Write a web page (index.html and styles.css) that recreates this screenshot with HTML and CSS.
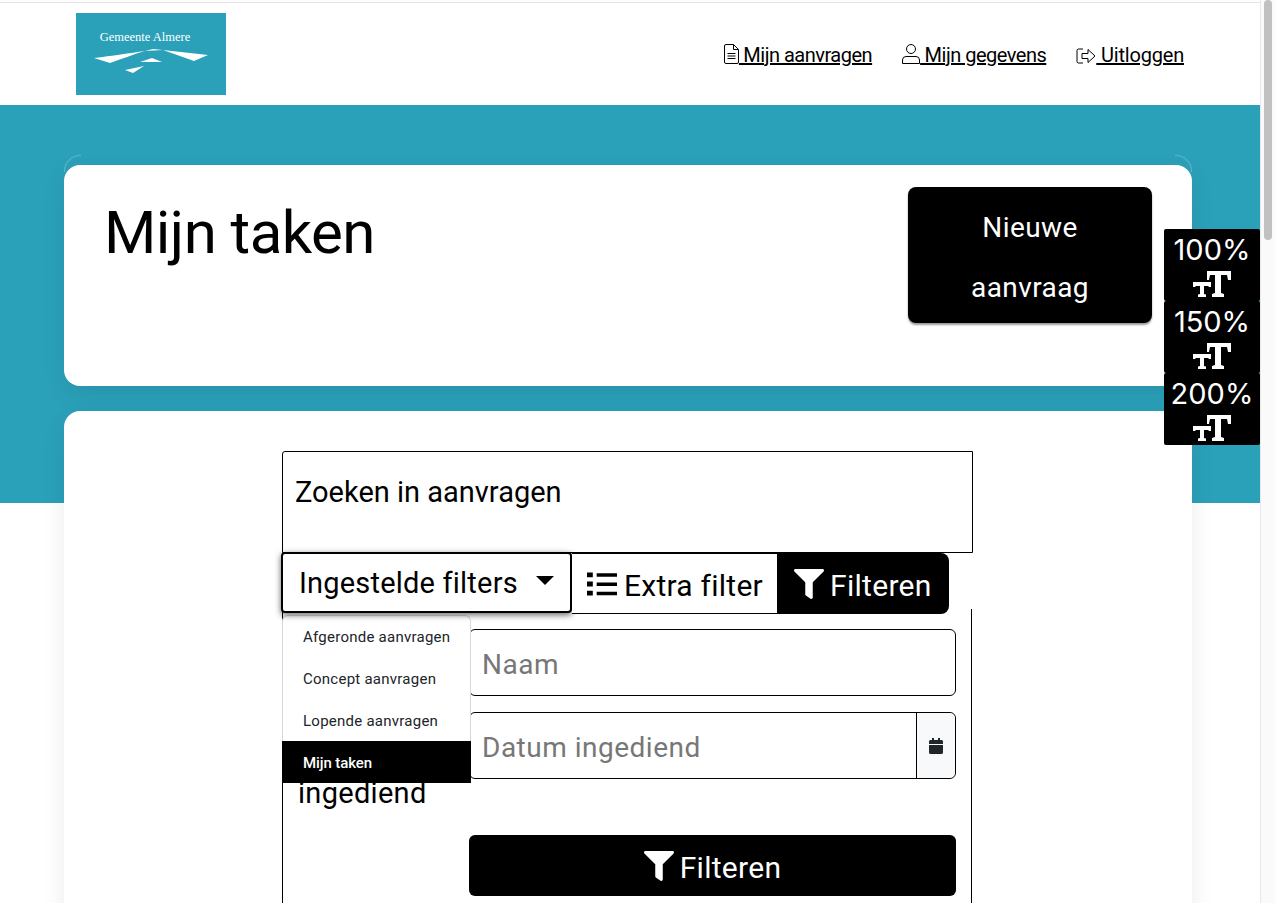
FILE: index.html
```html
<!DOCTYPE html>
<html lang="en">
<head>
    <meta name="viewport" content="width=device-width, initial-scale=1">
    <meta charset="utf-8">
    <title>Mijn taken</title>
    <link rel="stylesheet" href="styles.css">
</head>
<body>

<div class="page">

  <div class="top-bar">
    <div class="logo">
      <span class="logo-name">Gemeente Almere</span>
      <svg class="logo-mark" viewBox="0 0 116 26" width="116" height="26">
        <path fill="#fff" d="M0 10 C18 8 36 5 51 3 C40 6 28 11 16 15 Z"/>
        <path fill="#fff" d="M51 3 L59 1 L69 2 Z"/>
        <path fill="#fff" d="M69 2 L114 7 L100 13 Z"/>
        <path fill="#fff" d="M46 14 L58 10 L68 14 Z"/>
        <path fill="#fff" d="M31 22 L50 18 L39 25 Z"/>
      </svg>
    </div>
    <nav class="top-nav">
      <a href="#">
        <svg viewBox="0 0 15 20" width="15" height="20"><path fill="none" stroke="#000" d="M2 .5h7.500L14.500 5.500V18a1.500 1.500 0 0 1-1.500 1.500H2A1.500 1.500 0 0 1 .5 18V2A1.500 1.500 0 0 1 2 .5zM9.500.5v5h5"/><path stroke="#000" d="M3.500 9.500h8M3.500 12h8M3.500 14.500h8"/></svg>
        Mijn aanvragen
      </a>
      <a href="#">
        <svg viewBox="0 0 18 20" width="18" height="20"><circle fill="none" stroke="#000" cx="9" cy="5" r="4.500"/><path fill="none" stroke="#000" d="M4 12.500h10a3.500 3.500 0 0 1 3.500 3.500v3.500H.5V16A3.500 3.500 0 0 1 4 12.500z"/></svg>
        Mijn gegevens
      </a>
      <a href="#" class="nav-logout">
        <svg viewBox="0 0 20 16" width="20" height="16"><path fill="none" stroke="#000" d="M7 1H2.500A1.500 1.500 0 0 0 1 2.500v11A1.500 1.500 0 0 0 2.500 15H7"/><path fill="none" stroke="#000" stroke-linejoin="round" d="M6 5.500h6V1.500l7 6.500-7 6.500v-4H6z"/></svg>
        Uitloggen
      </a>
    </nav>
  </div>

  <div class="hero">
    <div class="frame">
      <div class="card title-card">
        <h1>Mijn taken</h1>
        <button class="new-btn">Nieuwe aanvraag</button>
      </div>
      <div class="card form-card">
        <div class="search-box">Zoeken in aanvragen</div>

        <div class="filter-row">
          <div class="select-box">Ingestelde filters <span class="caret"></span></div>
          <button class="extra-btn">
            <svg viewBox="0 0 31 24" width="30" height="24"><path d="M0 0h6v5H0zM0 9.500h6v5H0zM0 19h6v5H0zM10 1h21v3.500H10zM10 10.500h21v3.500H10zM10 20h21v3.500H10z"/></svg>
            Extra filter
          </button>
          <button class="filter-btn">
            <svg viewBox="0 0 512 512" width="30" height="30"><path fill="#fff" d="M487.976 0H24.028C2.710 0-8.047 25.866 7.058 40.971L192 225.941V432c0 7.831 3.821 15.170 10.237 19.662l80 55.980C298.020 518.690 320 507.493 320 487.980V225.941l184.947-184.970C520.021 25.896 509.338 0 487.976 0z"/></svg>
            Filteren
          </button>
        </div>

        <div class="filter-panel">
          <div class="panel-label">Datum ingediend</div>
          <div class="panel-fields">
            <div class="field">Naam</div>
            <div class="field field-date">
              <span>Datum ingediend</span>
              <span class="date-addon">
                <svg viewBox="0 0 14 16" width="14" height="16"><path fill="#212529" d="M3 0h2v2h4V0h2v2h1.500A1.500 1.500 0 0 1 14 3.500V6H0V3.500A1.500 1.500 0 0 1 1.500 2H3zM0 7h14v7.500a1.500 1.500 0 0 1-1.500 1.500h-11A1.500 1.500 0 0 1 0 14.500z"/></svg>
              </span>
            </div>
            <button class="wide-btn">
              <svg viewBox="0 0 512 512" width="30" height="30"><path fill="#fff" d="M487.976 0H24.028C2.710 0-8.047 25.866 7.058 40.971L192 225.941V432c0 7.831 3.821 15.170 10.237 19.662l80 55.980C298.020 518.690 320 507.493 320 487.980V225.941l184.947-184.970C520.021 25.896 509.338 0 487.976 0z"/></svg>
              Filteren
            </button>
          </div>
          <ul class="filter-menu">
            <li>Afgeronde aanvragen</li>
            <li>Concept aanvragen</li>
            <li>Lopende aanvragen</li>
            <li class="active">Mijn taken</li>
          </ul>
        </div>
      </div>
    </div>
  </div>

  <div class="size-switch">
    <div class="size-item">100%<svg viewBox="0 0 38 26" width="38" height="26"><path fill="#fff" d="M14 0h24v9h-3l-1-5h-6v18l3 1v3H19v-3l3-1V4h-5l-1 5h-2z"/><path fill="#fff" d="M0 11h18v5h-2l-1-1h-4v8l2 .5V26H5v-2.500l2-.5v-8H3l-1 1H0z"/></svg></div>
    <div class="size-item">150%<svg viewBox="0 0 38 26" width="38" height="26"><path fill="#fff" d="M14 0h24v9h-3l-1-5h-6v18l3 1v3H19v-3l3-1V4h-5l-1 5h-2z"/><path fill="#fff" d="M0 11h18v5h-2l-1-1h-4v8l2 .5V26H5v-2.500l2-.5v-8H3l-1 1H0z"/></svg></div>
    <div class="size-item">200%<svg viewBox="0 0 38 26" width="38" height="26"><path fill="#fff" d="M14 0h24v9h-3l-1-5h-6v18l3 1v3H19v-3l3-1V4h-5l-1 5h-2z"/><path fill="#fff" d="M0 11h18v5h-2l-1-1h-4v8l2 .5V26H5v-2.500l2-.5v-8H3l-1 1H0z"/></svg></div>
  </div>

</div>

<div class="scrollbar"><div class="scroll-thumb"></div></div>

</body>
</html>
```

FILE: styles.css
```css
* {
  box-sizing: border-box;
}
html, body {
  height: 100%;
}
body {
  margin: 0;
  font-family: "Roboto", "Liberation Sans", sans-serif;
  color: black;
  background: white;
  overflow: hidden;
}
button {
  font-family: inherit;
  cursor: pointer;
}



.page {
  width: 1260px;
  height: 903px;
  overflow: hidden;
  position: relative;
}
.scrollbar {
  position: fixed;
  top: 0;
  right: 0;
  width: 15px;
  height: 100%;
  background: #fafafa;
  border-left: 1px solid #e8e8e8;
}
.scroll-thumb {
  width: 8px;
  height: 240px;
  margin-left: 3px;
  background: #c1c1c1;
  border-radius: 4px;
}



.top-bar {
  height: 103px;
  margin-top: 2px;
  border-top: 1px solid #e4e4e4;
  padding: 10px 76px 0;
  display: flex;
  justify-content: space-between;
}
.logo {
  width: 150px;
  height: 82px;
  background: #2ba0b9;
  color: white;
  padding-top: 17px;
  text-align: center;
}
.logo-name {
  display: block;
  font-family: "Liberation Serif", serif;
  font-size: 12.500px;
  line-height: 14px;
  padding-right: 12px;
}
.logo-mark {
  display: block;
  margin: 4px 0 0 18px;
}
.top-nav {
  display: flex;
  gap: 30px;
  padding-top: 27px;
}
.top-nav a {
  color: black;
  font-size: 20px;
  line-height: 30px;
  letter-spacing: -0.5px;
  height: 30px;
  white-space: nowrap;
}
.top-nav .nav-logout {
  letter-spacing: -0.2px;
}
.top-nav svg {
  vertical-align: -2px;
}



.hero {
  height: 398px;
  background: #2ba0b9;
  padding: 50px 68px 0 64px;
}
.frame {
  position: relative;
  padding-top: 10px;
}
.frame::before,
.frame::after {
  content: "";
  position: absolute;
  top: 0;
  width: 16px;
  height: 16px;
  border-top: 1px solid rgba(255,255,255,0.25);
}
.frame::before {
  left: 0;
  border-left: 1px solid rgba(255,255,255,0.25);
  border-top-left-radius: 16px;
}
.frame::after {
  right: 0;
  border-right: 1px solid rgba(255,255,255,0.25);
  border-top-right-radius: 16px;
}
.card {
  position: relative;
  z-index: 1;
  background: white;
  border-radius: 16px;
  box-shadow: 0 8px 24px rgba(0,0,0,0.08);
}
.title-card {
  height: 221px;
  padding: 22px 40px 0 40px;
  display: flex;
  justify-content: space-between;
  align-items: flex-start;
}
.title-card h1 {
  margin: 1px 0 0;
  font-size: 60px;
  font-weight: 400;
  line-height: 90px;
  letter-spacing: -0.55px;
}
.new-btn {
  width: 244px;
  height: 136px;
  padding: 11px 40px 10px;
  background: black;
  color: white;
  border: 0;
  border-radius: 8px;
  font-size: 28px;
  line-height: 60px;
  letter-spacing: 0.4px;
  box-shadow: 0 2px 2px rgba(0,0,0,0.4);
}
.form-card {
  margin-top: 25px;
  height: 600px;
  padding: 40px 0 0 218px;
}



.search-box {
  width: 691px;
  height: 102px;
  border: 1px solid black;
  border-radius: 3px 0 0 0;
  padding: 20px 12px;
  font-size: 29px;
  line-height: 40px;
}
.filter-row {
  display: flex;
  height: 61px;
  position: relative;
  z-index: 2;
}
.select-box {
  width: 291px;
  height: 61px;
  margin: -1px 0 0 -1px;
  border: 2px solid black;
  border-radius: 4px;
  padding: 0 16px;
  font-size: 29px;
  line-height: 58px;
  letter-spacing: 0.2px;
  background: white;
  box-shadow: 0 2px 6px rgba(0,0,0,0.6);
  white-space: nowrap;
  display: flex;
  justify-content: space-between;
  align-items: center;
}
.caret {
  width: 0;
  height: 0;
  margin: -4px 0 0 0;
  border-left: 9px solid transparent;
  border-right: 9px solid transparent;
  border-top: 9px solid black;
}
.extra-btn {
  width: 206px;
  height: 61px;
  padding: 3px 0 0 15px;
  background: white;
  border: 1px solid black;
  border-left: 0;
  font-size: 30px;
  letter-spacing: 0.25px;
  display: flex;
  align-items: center;
  gap: 7px;
  white-space: nowrap;
}
.filter-btn {
  width: 171px;
  height: 61px;
  padding: 3px 0 0 16px;
  background: black;
  color: white;
  border: 0;
  border-radius: 0 8px 8px 0;
  font-size: 30px;
  letter-spacing: 0.3px;
  display: flex;
  align-items: center;
  gap: 6px;
}
.extra-btn svg,
.filter-btn svg,
.wide-btn svg {
  margin-top: -3px;
}



.filter-panel {
  width: 690px;
  height: 400px;
  margin-top: -5px;
  border-left: 1px solid black;
  border-right: 1px solid black;
  padding-top: 20px;
  display: flex;
  position: relative;
}
.panel-label {
  width: 186px;
  padding: 103px 0 0 15px;
  font-size: 29px;
  line-height: 41px;
  letter-spacing: 0.3px;
}
.panel-fields {
  width: 487px;
}
.field {
  height: 67px;
  border: 1px solid black;
  border-radius: 6px;
  padding: 0 12px;
  font-size: 28px;
  line-height: 70px;
  letter-spacing: 0.5px;
  color: #777;
  margin-bottom: 16px;
}
.field-date {
  padding-right: 0;
  display: flex;
  justify-content: space-between;
}
.date-addon {
  width: 39px;
  border-left: 1px solid black;
  border-radius: 0 6px 6px 0;
  background: #f8f9fa;
  display: flex;
  align-items: center;
  justify-content: center;
}
.wide-btn {
  width: 487px;
  height: 61px;
  margin-top: 56px;
  padding: 3px 0 0;
  background: black;
  color: white;
  border: 0;
  border-radius: 6px;
  font-size: 30px;
  letter-spacing: 0.3px;
  display: flex;
  align-items: center;
  justify-content: center;
  gap: 6px;
}



.filter-menu {
  position: absolute;
  top: 6px;
  left: -1px;
  width: 189px;
  height: 168px;
  margin: 0;
  padding: 0;
  list-style: none;
  background: white;
  border: 1px solid #d8d8d8;
  border-bottom: 0;
  border-radius: 6px 6px 0 0;
  font-size: 15px;
  letter-spacing: 0.25px;
  color: #212529;
}
.filter-menu li {
  height: 42px;
  line-height: 44px;
  padding-left: 20px;
  white-space: nowrap;
}
.filter-menu li:first-child {
  height: 41px;
  line-height: 42px;
}
.filter-menu li.active {
  margin: 0 -1px;
  padding-left: 21px;
  background: black;
  color: white;
  font-weight: 500;
  letter-spacing: -0.1px;
}



.size-switch {
  position: absolute;
  z-index: 5;
  top: 229px;
  left: 1164px;
  width: 96px;
}
.size-item {
  height: 72px;
  background: black;
  border-radius: 2px;
  color: white;
  font-family: "Inter", sans-serif;
  font-size: 29px;
  line-height: 42px;
  text-align: center;
}
.size-item svg {
  display: block;
  margin: 0 0 0 29px;
}
```
